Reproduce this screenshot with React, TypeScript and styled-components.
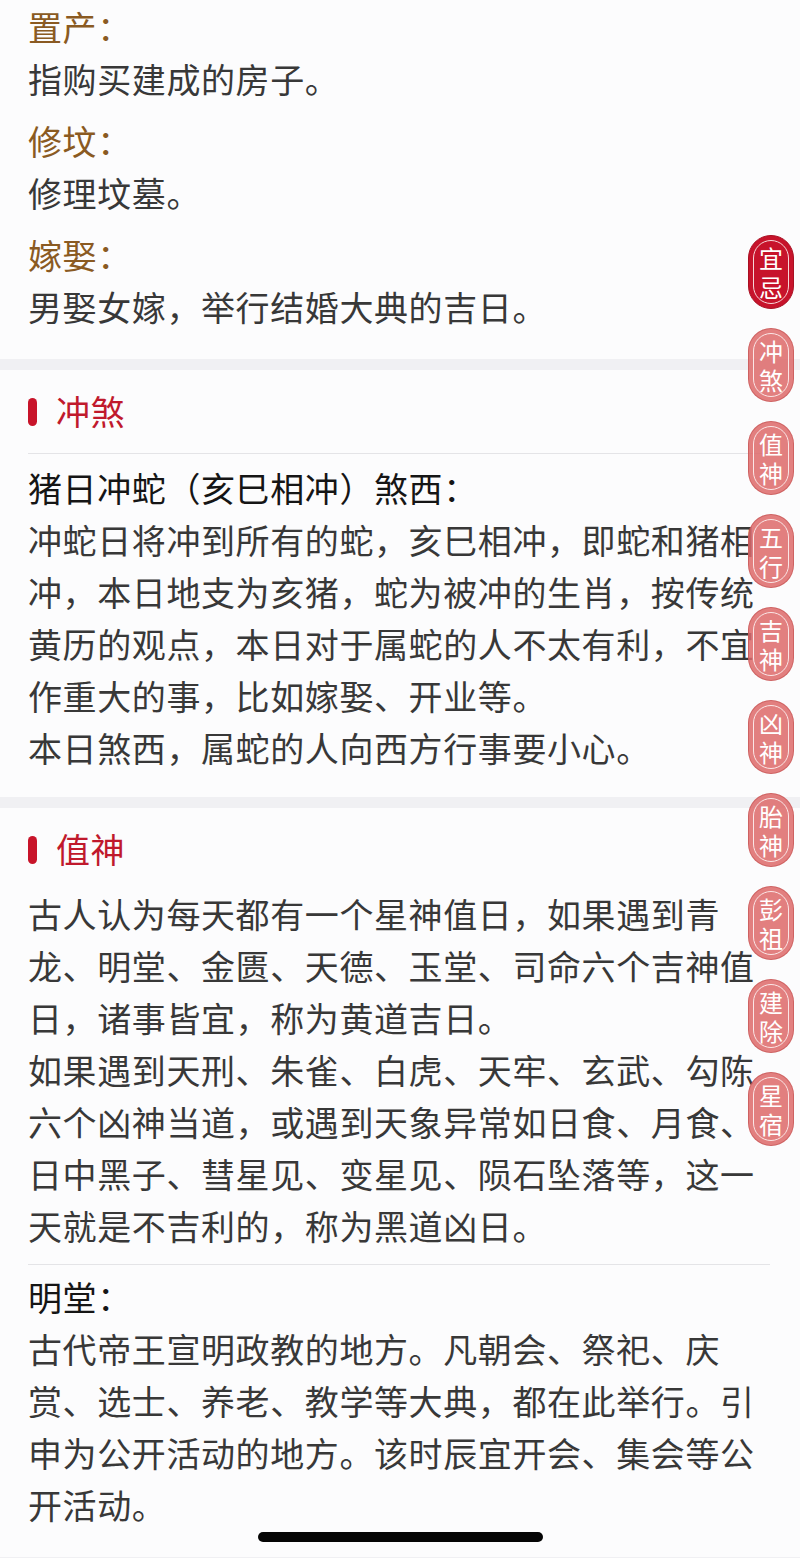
import React from "react";
import styled, { createGlobalStyle } from "styled-components";

const GlobalStyle = createGlobalStyle`
  html, body {
    margin: 0;
    padding: 0;
    background: #f0f0f3;
  }
  body {
    font-family: "Noto Sans CJK SC", "Noto Sans", sans-serif;
  }
`;

const Page = styled.div`
  width: 800px;
  min-height: 1558px;
  display: flex;
  flex-direction: column;
  gap: 11px;
  background: #f0f0f3;
`;

const Card = styled.section<{ $top?: number; $bottom?: number }>`
  background: #fcfcfd;
  padding: ${(p) => p.$top ?? 0}px 30px ${(p) => p.$bottom ?? 22}px 28px;
  display: flex;
  flex-direction: column;
`;

const Header = styled.div`
  height: 80px;
  display: flex;
  align-items: center;
  gap: 19px;
  font-size: 34px;
  color: #c0192c;
  letter-spacing: 0.6px;
`;

const Bar = styled.span`
  width: 9px;
  height: 28px;
  border-radius: 5px;
  background: #c8142a;
  margin-top: 3px;
`;

const Divider = styled.div<{ $above?: number; $below?: number }>`
  height: 1px;
  background: #e4e4e7;
  margin: ${(p) => p.$above ?? 0}px 0 ${(p) => p.$below ?? 0}px;
`;

const Item = styled.div<{ $gap?: number }>`
  display: flex;
  flex-direction: column;
  & + & {
    margin-top: ${(p) => p.$gap ?? 10}px;
  }
`;

const Label = styled.div<{ $tone?: "brown" | "dark" }>`
  font-size: 34px;
  line-height: 52px;
  letter-spacing: 0.6px;
  color: ${(p) => (p.$tone === "brown" ? "#8a5a22" : "#151515")};
`;

const Text = styled.p`
  margin: 0;
  font-size: 34px;
  line-height: 52px;
  letter-spacing: 0.6px;
  color: #383838;
  line-break: strict;
`;

const Tabs = styled.nav`
  position: absolute;
  top: 235px;
  right: 6px;
  display: flex;
  flex-direction: column;
  gap: 19px;
`;

const Tab = styled.div<{ $active?: boolean }>`
  width: 46px;
  height: 74px;
  box-sizing: border-box;
  border-radius: 23px;
  background: ${(p) => (p.$active ? "#c7132b" : "rgba(221, 104, 104, 0.85)")};
  border: 1px solid ${(p) => (p.$active ? "#a80f22" : "rgba(200, 88, 88, 0.75)")};
  padding: 4px;
  display: flex;
`;

const TabRing = styled.div<{ $active?: boolean }>`
  flex: 1;
  border-radius: 18px;
  border: 1.5px solid ${(p) => (p.$active ? "#f6d6d8" : "#fbe6e6")};
  display: flex;
  align-items: center;
  justify-content: center;
`;

const TabLabel = styled.span`
  width: 24px;
  color: #fff;
  font-size: 24px;
  line-height: 29px;
  text-align: center;
  word-break: break-all;
`;

const HomeIndicator = styled.div`
  position: absolute;
  top: 1532px;
  left: 258px;
  width: 285px;
  height: 10px;
  border-radius: 5px;
  background: #050505;
`;

const Root = styled.div`
  position: relative;
  width: 800px;
`;

const tabs = ["宜忌", "冲煞", "值神", "五行", "吉神", "凶神", "胎神", "彭祖", "建除", "星宿"];

const terms = [
  { name: "置产", desc: "指购买建成的房子。" },
  { name: "修坟", desc: "修理坟墓。" },
  { name: "嫁娶", desc: "男娶女嫁，举行结婚大典的吉日。" },
];

export default function App() {
  return (
    <Root>
      <GlobalStyle />
      <Page>
        <Card $top={1} $bottom={26}>
          {terms.map((t) => (
            <Item key={t.name}>
              <Label $tone="brown">{t.name}：</Label>
              <Text>{t.desc}</Text>
            </Item>
          ))}
        </Card>

        <Card $bottom={23}>
          <Header>
            <Bar />
            冲煞
          </Header>
          <Divider $above={3} $below={8} />
          <Label>猪日冲蛇（亥巳相冲）煞西：</Label>
          <Text>
            冲蛇日将冲到所有的蛇，亥巳相冲，即蛇和猪相冲，本日地支为亥猪，蛇为被冲的生肖，按传统黄历的观点，本日对于属蛇的人不太有利，不宜作重大的事，比如嫁娶、开业等。
          </Text>
          <Text>本日煞西，属蛇的人向西方行事要小心。</Text>
        </Card>

        <Card $bottom={26}>
          <Header>
            <Bar />
            值神
          </Header>
          <Text>
            古人认为每天都有一个星神值日，如果遇到青龙、明堂、金匮、天德、玉堂、司命六个吉神值日，诸事皆宜，称为黄道吉日。
          </Text>
          <Text>
            如果遇到天刑、朱雀、白虎、天牢、玄武、勾陈六个凶神当道，或遇到天象异常如日食、月食、日中黑子、彗星见、变星见、陨石坠落等，这一天就是不吉利的，称为黑道凶日。
          </Text>
          <Divider $above={12} $below={6} />
          <Label>明堂：</Label>
          <Text>
            古代帝王宣明政教的地方。凡朝会、祭祀、庆赏、选士、养老、教学等大典，都在此举行。引申为公开活动的地方。该时辰宜开会、集会等公开活动。
          </Text>
        </Card>
      </Page>

      <Tabs>
        {tabs.map((t, i) => (
          <Tab key={t} $active={i === 0}>
            <TabRing $active={i === 0}>
              <TabLabel>{t}</TabLabel>
            </TabRing>
          </Tab>
        ))}
      </Tabs>
      <HomeIndicator />
    </Root>
  );
}
